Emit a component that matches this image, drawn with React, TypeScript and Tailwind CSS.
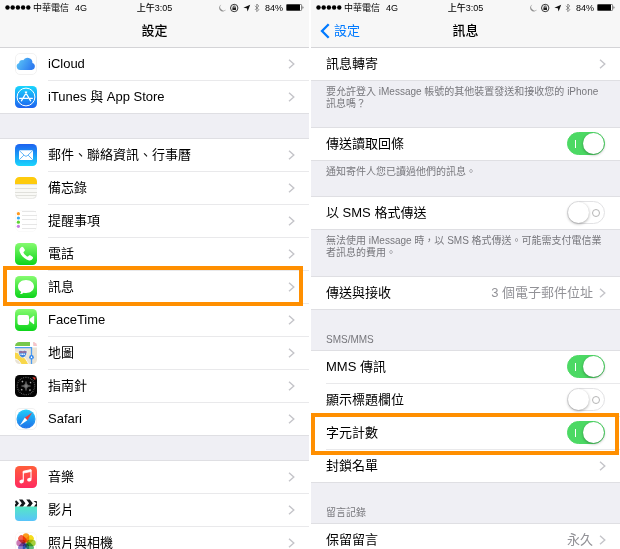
import { useState } from 'react';
import type { ReactNode } from 'react';

type IconProps = { id: string; from: string; to: string; children: ReactNode };

function GradientIcon({ id, from, to, children }: IconProps) {
  return (
    <svg viewBox="0 0 22 22" className="size-[22px]" aria-hidden="true">
      <defs>
        <linearGradient id={id} x1="0" y1="0" x2="0" y2="1">
          <stop offset="0" stopColor={from} />
          <stop offset="1" stopColor={to} />
        </linearGradient>
      </defs>
      <rect width="22" height="22" rx="4.5" fill={`url(#${id})`} />
      {children}
    </svg>
  );
}

function CloudIcon() {
  return (
    <svg viewBox="0 0 22 22" className="size-[22px]" aria-hidden="true">
      <defs>
        <linearGradient id="cloud" x1="0" y1="0" x2="1" y2="0.4">
          <stop offset="0" stopColor="#5ecbf8" />
          <stop offset="1" stopColor="#2f7df0" />
        </linearGradient>
      </defs>
      <rect x="0.5" y="0.5" width="21" height="21" rx="4.5" fill="#fff" stroke="#f1f1f1" />
      <path
        d="M5.4 17a3.6 3.6 0 0 1-1.3-7 3 3 0 0 1 4.1-2.7 4.9 4.9 0 0 1 9.200 2.700 3.600 3.600 0 0 1-.8 7z"
        fill="url(#cloud)"
      />
    </svg>
  );
}

function AppStoreIcon() {
  return (
    <GradientIcon id="appstore" from="#1ad6fd" to="#1d62f0">
      <circle cx="11" cy="11" r="8.9" fill="none" stroke="#fff" strokeWidth="1" />
      <path d="M11.700 6 6.400 14.800M10.300 6l5.300 8.800M4.600 12.300h8.200M15.200 12.300h2.200" fill="none" stroke="#fff" strokeWidth="1.300" strokeLinecap="round" />
    </GradientIcon>
  );
}

function MailIcon() {
  return (
    <GradientIcon id="mail" from="#1d62f0" to="#19d5fd">
      <rect x="4" y="6.2" width="14" height="9.8" rx="1" fill="#fff" />
      <path d="m4.300 6.600 5.500 5.200q1.200 1 2.400 0l5.500-5.200M4.400 15.700l4.500-4.600M17.600 15.700l-4.500-4.600" fill="none" stroke="#3aa2f6" strokeWidth="0.8" />
    </GradientIcon>
  );
}

function NotesIcon() {
  return (
    <svg viewBox="0 0 22 22" className="size-[22px]" aria-hidden="true">
      <rect width="22" height="22" rx="4.5" fill="#f9f9f6" />
      <path d="M0 7V4.500A4.500 4.500 0 0 1 4.500 0h13A4.500 4.500 0 0 1 22 4.500V7z" fill="#fecb0d" />
      <path d="M0 7.500h22M0 11.500h22M0 15.500h22M1 18.500h20" stroke="#dcdcd8" strokeWidth="0.9" />
      <path d="M.4 17.500a4.500 4.500 0 0 0 4.100 4.100h13a4.500 4.500 0 0 0 4.100-4.100" fill="none" stroke="#e2e2df" strokeWidth="0.8" />
    </svg>
  );
}

function RemindersIcon() {
  return (
    <svg viewBox="0 0 22 22" className="size-[22px]" aria-hidden="true">
      <rect x="0.5" y="0.5" width="21" height="21" rx="4.5" fill="#fff" stroke="#fafafa" />
      <path d="M7 1.500h14M7 5.500h15M7 9.500h15M7 14.500h15M7 18.500h14" stroke="#e3e3e3" strokeWidth="0.9" />
      <circle cx="3.4" cy="3.7" r="1.6" fill="#ff9a1f" />
      <circle cx="3.4" cy="8" r="1.6" fill="#37a9f5" />
      <circle cx="3.4" cy="12.200" r="1.6" fill="#5fd535" />
      <circle cx="3.4" cy="16.300" r="1.6" fill="#c57be0" />
    </svg>
  );
}

function PhoneIcon() {
  return (
    <GradientIcon id="phone" from="#86fb70" to="#0cd41a">
      <path
        d="M6.500 4.100c.6-.5 1.300-.4 1.700.2l1.500 2.300c.3.500.2 1-.2 1.400l-.9.900c-.3.300-.2.700 0 1a13 13 0 0 0 3.400 3.500c.4.200.7.200 1 0l.9-.9c.4-.4.900-.5 1.400-.2l2.200 1.500c.6.400.7 1.100.3 1.700-.9 1.300-2.100 2.200-3.700 1.900C9.500 16.500 5.500 12 4.500 7.900c-.3-1.600.6-2.900 2-3.800z"
        fill="#fff"
      />
    </GradientIcon>
  );
}

function MessagesIcon() {
  return (
    <GradientIcon id="messages" from="#86fb70" to="#0cd41a">
      <path
        d="M11 4c4.600 0 8 2.900 8 6.500S15.600 17 11 17c-.8 0-1.600-.1-2.400-.3-.9.800-2.200 1.400-3.700 1.300.8-.6 1.200-1.400 1.200-2.300C4.200 14.500 3 12.600 3 10.500 3 6.900 6.400 4 11 4z"
        fill="#fff"
      />
    </GradientIcon>
  );
}

function FaceTimeIcon() {
  return (
    <GradientIcon id="facetime" from="#86fb70" to="#0cd41a">
      <rect x="2.5" y="6" width="11.5" height="10" rx="2" fill="#fff" />
      <path d="m14.600 10 3.700-3q.9-.6.900.4v7.200q0 1-.9.400l-3.700-3z" fill="#fff" />
    </GradientIcon>
  );
}

function MapsIcon() {
  return (
    <svg viewBox="0 0 22 22" className="size-[22px]" aria-hidden="true">
      <clipPath id="maps">
        <rect width="22" height="22" rx="4.5" />
      </clipPath>
      <g clipPath="url(#maps)">
        <rect width="22" height="22" fill="#e9e3d5" />
        <path d="M2 0h13v4H0V2z" fill="#77c84c" />
        <path d="M18 0h4v4h-3z" fill="#f7c3cb" />
        <path d="M0 4h15V0h3v4h4v1.500H0z" fill="#fff" />
        <path d="M0 10c6 1 10 5 13.500 12H6C4.500 19 3 17.500 0 16.500z" fill="#f8d74a" />
        <path d="M0 10c6 1 10 5 13.500 12M0 17c3 .5 4.500 2 6 5" fill="none" stroke="#fff" strokeWidth="0.8" />
        <path d="M0 5.600h16.500V22" fill="none" stroke="#4c9cf1" strokeWidth="1.3" />
        <path d="M3.500 9 6 8.300 7.700 9l1.800-.7 2.500.7c-.5 3.500-.5 5.500-4.300 6.800C4 14.500 4 12.500 3.500 9z" fill="#3f83dd" stroke="#fff" strokeWidth="0.6" />
        <path d="M4 10h7.500" stroke="#d85b66" strokeWidth="1" />
        <path d="M5.500 12.300h4.400" stroke="#fff" strokeWidth="1.400" strokeDasharray="1.1 .5" />
        <circle cx="16.5" cy="15.3" r="2.300" fill="#3186ed" />
        <path d="m16.500 13.700 1.100 2.700-1.100-.5-1.100.5z" fill="#fff" />
      </g>
    </svg>
  );
}

function CompassIcon() {
  return (
    <svg viewBox="0 0 22 22" className="size-[22px]" aria-hidden="true">
      <rect width="22" height="22" rx="4.5" fill="#050505" />
      <circle cx="11" cy="11" r="8.7" fill="none" stroke="#777" strokeWidth="1.3" strokeDasharray=".6 1.2" />
      <circle cx="11" cy="11" r="5.7" fill="none" stroke="#a5a5a5" strokeWidth="1.3" strokeDasharray="1.5 7.45" strokeDashoffset="-3.7" />
      <circle cx="11" cy="11" r="2.2" fill="#383838" stroke="#666" strokeWidth="0.5" />
      <path d="M11 6.500v9M6.500 11h9" stroke="#a5a5a5" strokeWidth="0.8" />
      <path d="m17.300 2.200 3.200.3-.3 2.700z" fill="#f43b30" />
    </svg>
  );
}

function SafariIcon() {
  return (
    <svg viewBox="0 0 22 22" className="size-[22px]" aria-hidden="true">
      <defs>
        <linearGradient id="safari" x1="0" y1="0" x2="0" y2="1">
          <stop offset="0" stopColor="#1fcdfa" />
          <stop offset="1" stopColor="#1e6ee9" />
        </linearGradient>
      </defs>
      <rect x="0.5" y="0.5" width="21" height="21" rx="4.5" fill="#fff" stroke="#f1f1f1" />
      <circle cx="11" cy="11" r="9.5" fill="url(#safari)" />
      <circle cx="11" cy="11" r="8.5" fill="none" stroke="#6cc4fa" strokeWidth="0.6" strokeDasharray=".4 1.3" />
      <path d="m17.200 4.600-7.400 5.100 2.500 2.500z" fill="#f23a38" />
      <path d="m4.800 17.400 5-7.700 2.500 2.500z" fill="#fff" />
    </svg>
  );
}

function MusicIcon() {
  return (
    <GradientIcon id="music" from="#ff5e3a" to="#ff2a60">
      <path d="m8.300 5.200 7.700-1.600v1.900L8.300 7.100z" fill="#fff" stroke="#fff" strokeWidth="0.8" />
      <path d="M8.300 5.500v9.700M16 4v9.200" stroke="#fff" strokeWidth="1.1" />
      <ellipse cx="6.6" cy="15.5" rx="2.2" ry="1.8" fill="#fff" transform="rotate(-15 6.6 15.5)" />
      <ellipse cx="14.3" cy="13.7" rx="2.2" ry="1.8" fill="#fff" transform="rotate(-15 14.3 13.7)" />
    </GradientIcon>
  );
}

function VideosIcon() {
  return (
    <svg viewBox="0 0 22 22" className="size-[22px]" aria-hidden="true">
      <defs>
        <linearGradient id="videos" x1="0" y1="0" x2="0" y2="1">
          <stop offset="0" stopColor="#55e8c4" />
          <stop offset="1" stopColor="#58c3fa" />
        </linearGradient>
        <clipPath id="clapper">
          <rect width="22" height="22" rx="4" />
        </clipPath>
      </defs>
      <g clipPath="url(#clapper)">
        <rect width="22" height="22" fill="#fff" />
        <rect y="7.5" width="22" height="14.5" fill="url(#videos)" />
        <path d="M-1 1.500h2.500L4 4.300 1.500 7.500H-1.500L1 4.300zM4 .5h3.500l3 3.800L8 7.500H4.300l2.500-3.200zM11.300.5h3.500l3 3.800-2.500 3.200h-3.700l2.500-3.200zM18.500 2H22v5.500h-3l2.500-3.200z" fill="#14191b" />
      </g>
    </svg>
  );
}

const PETALS = ['#fb9a1c', '#f5dc1e', '#a5cf3c', '#5cbb7d', '#5fa5d9', '#8a7fd0', '#cb79b6', '#f3604f'];

function PhotosIcon() {
  return (
    <svg viewBox="0 0 22 22" className="size-[22px]" aria-hidden="true">
      <rect x="0.5" y="0.5" width="21" height="21" rx="4.5" fill="#fff" stroke="#f8f8f8" />
      {PETALS.map((color, i) => (
        <rect
          key={color}
          x="7.8"
          y="1.3"
          width="6.4"
          height="9.2"
          rx="3.2"
          fill={color}
          className="mix-blend-multiply"
          transform={`rotate(${i * 45} 11 11)`}
        />
      ))}
    </svg>
  );
}

function Chevron() {
  return (
    <svg viewBox="0 0 7 10" className="h-2.5 w-[7px] shrink-0" aria-hidden="true">
      <path d="m1 .7 4.800 4.300L1 9.300" fill="none" stroke="#c4c4c9" strokeWidth="1.400" />
    </svg>
  );
}

function StatusBar() {
  return (
    <div className="grid h-[15px] grid-cols-[1fr_auto_1fr] items-center px-[5px] text-[9px] leading-3">
      <div className="flex items-center">
        <svg viewBox="0 0 26 5" className="mr-[2px] h-[5px] w-[26px]" aria-label="訊號">
          {[2.5, 7.7, 12.9, 18.1, 23.3].map((cx) => (
            <circle key={cx} cx={cx} cy="2.5" r="2.2" />
          ))}
        </svg>
        <span>中華電信</span>
        <span className="ml-1.5">4G</span>
      </div>
      <span className="font-medium">上午3:05</span>
      <div className="flex items-center justify-end">
        <svg viewBox="0 0 41 10" className="mr-[5px] h-2.5 w-[41px]" aria-hidden="true">
          <path d="M2.400 1.400a3.700 3.700 0 1 0 4.700 5.200 3.500 3.500 0 0 1-4.700-5.200z" fill="#8e8e8e" />
          <circle cx="15.200" cy="5" r="3.700" fill="none" stroke="#222" strokeWidth="0.9" />
          <rect x="13.400" y="4.500" width="3.600" height="2.500" fill="#222" />
          <path d="M14.200 4.700v-.8a1 1 0 0 1 2 0v.8" fill="none" stroke="#222" strokeWidth="0.8" />
          <path d="m31.200 1.700-2.600 6.800-.8-3.200-3.400-.5z" fill="#111" />
          <path d="m36 2.800 3.800 3.900-2 2V1l2 2L36 6.900" fill="none" stroke="#777" strokeWidth="0.8" />
        </svg>
        <span>84%</span>
        <svg viewBox="0 0 18 7" className="ml-[3px] h-[7px] w-[18px]" aria-label="電池">
          <rect x="0.4" y="0.4" width="15.2" height="6.2" rx="1" fill="#fff" stroke="#222" strokeWidth="0.6" />
          <rect x="0.6" y="0.600" width="13.4" height="5.800" rx="0.5" />
          <path d="M16.500 2.300q1 .2 1 1.200t-1 1.200z" fill="#555" />
        </svg>
      </div>
    </div>
  );
}

function NavBar({ title, back }: { title: string; back?: string }) {
  return (
    <header className="border-b border-[#d4d4d7] bg-[#f7f7f7]">
      <StatusBar />
      <div className="grid h-8 grid-cols-[1fr_auto_1fr] items-center px-[9px]">
        <div>
          {back && (
            <a href="#settings" className="flex items-center gap-1 text-[#007aff]">
              <svg viewBox="0 0 10 16" className="h-4 w-2.5" aria-hidden="true">
                <path d="M8.700 1.200 2 8l6.700 6.800" fill="none" stroke="currentColor" strokeWidth="2.300" />
              </svg>
              {back}
            </a>
          )}
        </div>
        <h1 className="font-medium">{title}</h1>
      </div>
    </header>
  );
}

function Group({ children }: { children: ReactNode }) {
  return <ul className="border-b border-[#dfdfe3] bg-white">{children}</ul>;
}

function SettingLink({ icon, label, highlighted }: { icon: ReactNode; label: string; highlighted?: boolean }) {
  return (
    <li className="group relative">
      <a href="#detail" className="flex items-stretch pl-[15px]">
        <span className="flex w-[33px] items-center pb-px group-last:pb-0">{icon}</span>
        <span className="flex h-[33px] flex-1 items-center justify-between border-b border-[#e9e9eb] pr-[14px] group-last:h-8 group-last:border-b-0">
          {label}
          <Chevron />
        </span>
      </a>
      {highlighted && (
        <span className="pointer-events-none absolute -top-[5px] right-1.5 -bottom-0.5 left-[3px] z-10 border-4 border-[#ff8f00]" />
      )}
    </li>
  );
}

function DetailRow({ label, value }: { label: string; value?: string }) {
  return (
    <li className="group pl-[15px]">
      <a
        href="#detail"
        className="flex h-[33px] items-center border-b border-[#e9e9eb] pr-[14px] group-last:h-8 group-last:border-b-0"
      >
        <span className="flex-1">{label}</span>
        {value && <span className="mr-1.5 text-[#929297]">{value}</span>}
        <Chevron />
      </a>
    </li>
  );
}

function SwitchRow({ label, initial, highlighted }: { label: string; initial: boolean; highlighted?: boolean }) {
  const [on, setOn] = useState(initial);

  return (
    <li className="group relative pl-[15px]">
      <label className="flex h-[33px] items-center justify-between border-b border-[#e9e9eb] pr-[15px] group-last:h-8 group-last:border-b-0">
        {label}
        <span className="mb-px grid items-center">
          <input
            type="checkbox"
            role="switch"
            checked={on}
            onChange={(e) => setOn(e.target.checked)}
            className="peer col-start-1 row-start-1 h-[23px] w-[38px] appearance-none rounded-full border border-[#e2e2e4] bg-white checked:border-[#4cd964] checked:bg-[#4cd964]"
          />
          <span className="pointer-events-none col-start-1 row-start-1 flex items-center justify-between px-px peer-checked:flex-row-reverse">
            <span className="size-[21px] rounded-full bg-white shadow-[0_1px_3px_rgba(0,0,0,0.35)]" />
            {on ? (
              <span className="ml-[7px] h-2 w-px bg-white" />
            ) : (
              <span className="mr-1 size-2 rounded-full border border-[#b5b5b5]" />
            )}
          </span>
        </span>
      </label>
      {highlighted && (
        <span className="pointer-events-none absolute -top-1 right-px -bottom-[5px] left-0 z-10 border-4 border-[#ff8f00]" />
      )}
    </li>
  );
}

function Spacer() {
  return <div className="h-[25px] border-b border-[#dfdfe3]" />;
}

function Footnote({ children }: { children: ReactNode }) {
  return (
    <p className="min-h-9 border-b border-[#dfdfe3] px-[15px] pt-[5px] pb-[17px] text-[10px] leading-3 text-[#77777c]">
      {children}
    </p>
  );
}

function GroupTitle({ children }: { children: ReactNode }) {
  return (
    <h2 className="flex h-[41px] items-end border-b border-[#dfdfe3] px-[15px] pb-1 text-[10px] leading-3 text-[#77777c]">
      {children}
    </h2>
  );
}

export default function App() {
  return (
    <main
      lang="zh-Hant"
      className="grid h-screen grid-cols-2 gap-0.5 overflow-hidden bg-white font-['Liberation_Sans','Noto_Sans_CJK_TC',sans-serif] text-[13px] leading-4 text-black"
    >
      <section className="min-w-0 bg-[#efeff4]">
        <NavBar title="設定" />
        <Group>
          <SettingLink icon={<CloudIcon />} label="iCloud" />
          <SettingLink icon={<AppStoreIcon />} label="iTunes 與 App Store" />
        </Group>
        <Spacer />
        <Group>
          <SettingLink icon={<MailIcon />} label="郵件、聯絡資訊、行事曆" />
          <SettingLink icon={<NotesIcon />} label="備忘錄" />
          <SettingLink icon={<RemindersIcon />} label="提醒事項" />
          <SettingLink icon={<PhoneIcon />} label="電話" />
          <SettingLink icon={<MessagesIcon />} label="訊息" highlighted />
          <SettingLink icon={<FaceTimeIcon />} label="FaceTime" />
          <SettingLink icon={<MapsIcon />} label="地圖" />
          <SettingLink icon={<CompassIcon />} label="指南針" />
          <SettingLink icon={<SafariIcon />} label="Safari" />
        </Group>
        <Spacer />
        <Group>
          <SettingLink icon={<MusicIcon />} label="音樂" />
          <SettingLink icon={<VideosIcon />} label="影片" />
          <SettingLink icon={<PhotosIcon />} label="照片與相機" />
        </Group>
      </section>

      <section className="min-w-0 bg-[#efeff4]">
        <NavBar title="訊息" back="設定" />
        <Group>
          <DetailRow label="訊息轉寄" />
        </Group>
        <Footnote>要允許登入 iMessage 帳號的其他裝置發送和接收您的 iPhone 訊息嗎？</Footnote>
        <Group>
          <SwitchRow label="傳送讀取回條" initial={true} />
        </Group>
        <Footnote>通知寄件人您已讀過他們的訊息。</Footnote>
        <Group>
          <SwitchRow label="以 SMS 格式傳送" initial={false} />
        </Group>
        <Footnote>無法使用 iMessage 時，以 SMS 格式傳送。可能需支付電信業者訊息的費用。</Footnote>
        <Group>
          <DetailRow label="傳送與接收" value="3 個電子郵件位址" />
        </Group>
        <GroupTitle>SMS/MMS</GroupTitle>
        <Group>
          <SwitchRow label="MMS 傳訊" initial={true} />
          <SwitchRow label="顯示標題欄位" initial={false} />
          <SwitchRow label="字元計數" initial={true} highlighted />
          <DetailRow label="封鎖名單" />
        </Group>
        <GroupTitle>留言記錄</GroupTitle>
        <Group>
          <DetailRow label="保留留言" value="永久" />
        </Group>
      </section>
    </main>
  );
}
